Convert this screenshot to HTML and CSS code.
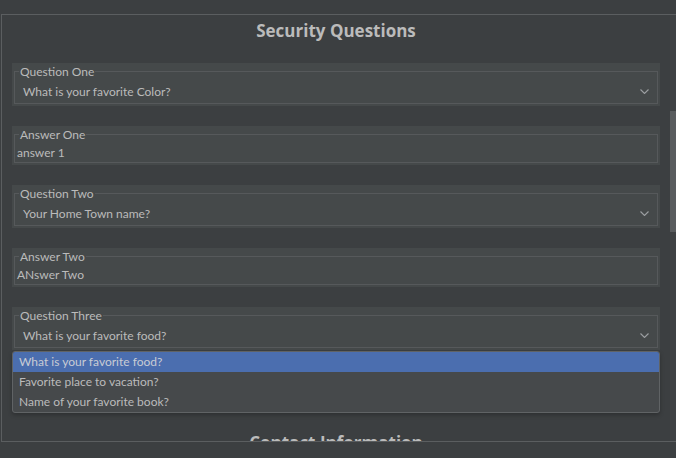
FILE: index.html
```html
<!DOCTYPE html>
<html lang="en">
<head>
<meta charset="utf-8">
<title>Security Questions</title>
<link rel="stylesheet" href="styles.css">
</head>
<body>
<div class="panel">
  <div class="content">
    <section class="section">
      <h2 class="section-title">Security Questions</h2>
      <div class="fields">
        <div class="field combo">
          <fieldset class="box">
            <legend class="label">Question One</legend>
            <div class="combo-value"><span class="val">What is your favorite Color?</span>
              <svg class="chev" width="9" height="5" viewBox="0 0 9 5"><polyline points="0.5,0.5 4.5,4.5 8.5,0.5" fill="none" stroke="#9c9fa2" stroke-width="1.1"/></svg>
            </div>
          </fieldset>
        </div>
        <div class="field text">
          <fieldset class="box">
            <legend class="label">Answer One</legend>
            <div class="text-value">answer 1</div>
          </fieldset>
        </div>
        <div class="field combo">
          <fieldset class="box">
            <legend class="label">Question Two</legend>
            <div class="combo-value"><span class="val">Your Home Town name?</span>
              <svg class="chev" width="9" height="5" viewBox="0 0 9 5"><polyline points="0.5,0.5 4.5,4.5 8.5,0.5" fill="none" stroke="#9c9fa2" stroke-width="1.1"/></svg>
            </div>
          </fieldset>
        </div>
        <div class="field text">
          <fieldset class="box">
            <legend class="label">Answer Two</legend>
            <div class="text-value">ANswer Two</div>
          </fieldset>
        </div>
        <div class="field combo open">
          <fieldset class="box">
            <legend class="label">Question Three</legend>
            <div class="combo-value"><span class="val">What is your favorite food?</span>
              <svg class="chev" width="9" height="5" viewBox="0 0 9 5"><polyline points="0.5,0.5 4.5,4.5 8.5,0.5" fill="none" stroke="#9c9fa2" stroke-width="1.1"/></svg>
            </div>
          </fieldset>
          <ul class="popup">
            <li class="opt selected">What is your favorite food?</li>
            <li class="opt">Favorite place to vacation?</li>
            <li class="opt">Name of your favorite book?</li>
          </ul>
        </div>
      </div>
    </section>
    <section class="section next">
      <h2 class="section-title">Contact Information</h2>
    </section>
  </div>
  <div class="scrollbar"><div class="thumb"></div></div>
</div>
</body>
</html>
```

FILE: styles.css
```css
html, body {
  margin: 0;
  padding: 0;
  background: #3c3f41;
  overflow: hidden;
}
body {
  font-family: "Lato", "Open Sans", sans-serif;
  font-size: 12px;
  color: #bbbbbb;
  width: 676px;
  height: 458px;
}
.panel {
  margin: 14px 0 0 1px;
  height: 426px;
  border: 1px solid #5b5e60;
  border-right: none;
  display: flex;
}
.content {
  flex: 1;
  overflow: hidden;
  padding: 4px 10px 0 10px;
}
.section-title {
  margin: 0;
  font-family: "Open Sans", "Lato", sans-serif;
  font-size: 17px;
  font-weight: bold;
  line-height: 24px;
  text-align: center;
  color: #bbbbbb;
}
.section .fields {
  margin-top: 20px;
  display: flex;
  flex-direction: column;
  gap: 20px;
}
.section.next {
  margin-top: 81px;
}
.field {
  position: relative;
  background: #45494a;
  padding: 0 2px 2px 2px;
}
.box {
  margin: 0;
  padding: 0;
  min-inline-size: 0;
  border: 1px solid #56595b;
}
.label {
  margin-left: 4px;
  padding: 0 1px;
  height: 16px;
  line-height: 17px;
  color: #bbbbbb;
}
.combo-value {
  display: flex;
  align-items: center;
  justify-content: space-between;
  box-sizing: border-box;
  height: 24px;
  padding: 2px 8px 0 8px;
}
.val {
  line-height: 22px;
}
.chev {
  display: block;
  margin-top: -2px;
}
.text-value {
  height: 20px;
  line-height: 21px;
  padding: 0 2px;
}
.popup {
  position: absolute;
  left: 0;
  right: 0;
  top: calc(100% + 1px);
  margin: 0;
  padding: 0;
  list-style: none;
  background: #46494b;
  border: 1px solid #606365;
  border-radius: 3px;
  box-shadow: 0 2px 4px rgba(0, 0, 0, 0.25);
  overflow: hidden;
  z-index: 2;
}
.opt {
  height: 20px;
  line-height: 20px;
  padding: 0 6px;
  color: #bbbbbb;
}
.opt.selected {
  background: #4b6eaf;
  color: #c8ccd4;
}
.scrollbar {
  width: 6px;
  background: #3f4244;
  padding-top: 96px;
}
.thumb {
  height: 121px;
  background: #595c5e;
}
```
